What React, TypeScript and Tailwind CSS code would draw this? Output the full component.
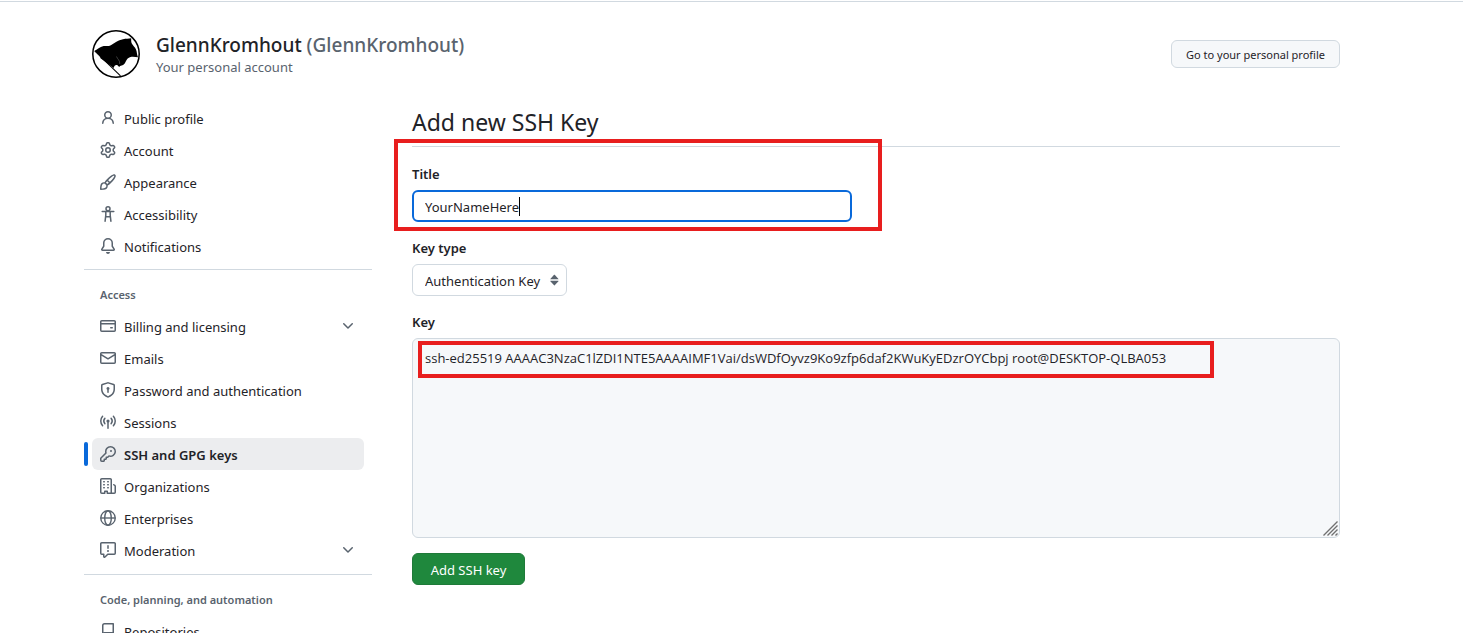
import { ReactNode, useState } from 'react';

function Icon({ children }: { children: ReactNode }) {
  return (
    <svg viewBox="0 0 16 16" className="size-4 shrink-0 fill-[#59636e] text-[#59636e]" aria-hidden="true">
      {children}
    </svg>
  );
}

const icons = {
  person: (
    <path d="M10.561 8.073a6.005 6.005 0 0 1 3.432 5.142.75.75 0 1 1-1.498.07 4.5 4.5 0 0 0-8.99 0 .75.75 0 0 1-1.498-.07 6.004 6.004 0 0 1 3.431-5.142 3.999 3.999 0 1 1 5.123 0ZM10.5 5a2.5 2.5 0 1 0-5 0 2.5 2.5 0 0 0 5 0Z" />
  ),
  gear: (
    <path d="M8 0a8.2 8.2 0 0 1 .701.031C9.444.095 9.99.645 10.16 1.29l.288 1.107c.018.066.079.158.212.224.231.114.454.243.668.386.123.082.233.09.299.071l1.103-.303c.644-.176 1.392.021 1.82.63.27.385.506.792.704 1.218.315.675.111 1.422-.364 1.891l-.814.806c-.049.048-.098.147-.088.294.016.257.016.515 0 .772-.01.147.038.246.088.294l.814.806c.475.469.679 1.216.364 1.891a7.977 7.977 0 0 1-.704 1.217c-.428.61-1.176.807-1.82.63l-1.102-.302c-.067-.019-.177-.011-.3.071a5.909 5.909 0 0 1-.668.386c-.133.066-.194.158-.211.224l-.29 1.106c-.168.646-.715 1.196-1.458 1.26a8.006 8.006 0 0 1-1.402 0c-.743-.064-1.289-.614-1.458-1.26l-.289-1.106c-.018-.066-.079-.158-.212-.224a5.738 5.738 0 0 1-.668-.386c-.123-.082-.233-.09-.299-.071l-1.103.303c-.644.176-1.392-.021-1.82-.63a8.12 8.12 0 0 1-.704-1.218c-.315-.675-.111-1.422.363-1.891l.815-.806c.05-.048.098-.147.088-.294a6.214 6.214 0 0 1 0-.772c.01-.147-.038-.246-.088-.294l-.815-.806C.635 6.045.431 5.298.746 4.623a7.92 7.92 0 0 1 .704-1.217c.428-.61 1.176-.807 1.82-.63l1.102.302c.067.019.177.011.3-.071.214-.143.437-.272.668-.386.133-.066.194-.158.211-.224l.29-1.106C6.009.645 6.556.095 7.299.03 7.53.01 7.764 0 8 0Zm-.571 1.525c-.036.003-.108.036-.137.146l-.289 1.105c-.147.561-.549.967-.998 1.189-.173.086-.34.183-.5.29-.417.278-.97.423-1.529.27l-1.103-.303c-.109-.03-.175.016-.195.045-.22.312-.412.644-.573.99-.014.031-.021.11.059.19l.815.806c.411.406.562.957.53 1.456a4.709 4.709 0 0 0 0 .582c.032.499-.119 1.05-.53 1.456l-.815.806c-.081.08-.073.159-.059.19.162.346.353.677.573.989.02.03.085.076.195.046l1.102-.303c.56-.153 1.113-.008 1.53.27.161.107.328.204.501.29.447.222.85.629.997 1.189l.289 1.105c.029.109.101.143.137.146a6.6 6.6 0 0 0 1.142 0c.036-.003.108-.036.137-.146l.289-1.105c.147-.561.549-.967.998-1.189.173-.086.34-.183.5-.29.417-.278.97-.423 1.529-.27l1.103.303c.109.029.175-.016.195-.045.22-.313.411-.644.573-.99.014-.031.021-.11-.059-.19l-.815-.806c-.411-.406-.562-.957-.53-1.456a4.709 4.709 0 0 0 0-.582c-.032-.499.119-1.05.53-1.456l.815-.806c.081-.08.073-.159.059-.19a6.464 6.464 0 0 0-.573-.989c-.02-.03-.085-.076-.195-.046l-1.102.303c-.56.153-1.113.008-1.53-.27a4.44 4.44 0 0 0-.501-.29c-.447-.222-.85-.629-.997-1.189l-.289-1.105c-.029-.11-.101-.143-.137-.146a6.6 6.6 0 0 0-1.142 0ZM11 8a3 3 0 1 1-6 0 3 3 0 0 1 6 0ZM9.5 8a1.5 1.5 0 1 0-3.001.001A1.5 1.5 0 0 0 9.5 8Z" />
  ),
  brush: (
    <path d="M11.134 1.535c.7-.509 1.416-.942 2.076-1.155.649-.21 1.463-.267 2.069.34.603.601.568 1.411.368 2.07-.202.668-.624 1.39-1.125 2.096-1.011 1.424-2.496 2.987-3.775 4.249-1.098 1.084-2.132 1.839-3.04 2.3a3.744 3.744 0 0 1-1.055 3.217c-.431.431-1.065.691-1.657.861-.614.177-1.294.287-1.914.357A21.151 21.151 0 0 1 .797 16H.743l.007-.75H.749L.742 16a.75.75 0 0 1-.743-.742l.743-.008-.742.007v-.054a21.25 21.25 0 0 1 .13-2.284c.067-.647.187-1.287.358-1.914.17-.591.43-1.226.86-1.657a3.746 3.746 0 0 1 3.227-1.054c.466-.893 1.225-1.907 2.314-2.982 1.271-1.255 2.833-2.75 4.245-3.777ZM1.62 13.089c-.051.464-.086.929-.104 1.395.466-.018.932-.053 1.396-.104a10.511 10.511 0 0 0 1.668-.309c.526-.151.856-.325 1.011-.48a2.25 2.25 0 1 0-3.182-3.182c-.155.155-.329.485-.48 1.01a10.515 10.515 0 0 0-.309 1.67Zm10.396-10.34c-1.224.89-2.605 2.189-3.822 3.384l1.718 1.718c1.21-1.205 2.51-2.597 3.387-3.833.47-.662.78-1.227.912-1.662.134-.444.032-.551.009-.575h-.001V1.78c-.014-.014-.113-.113-.548.027-.432.14-.995.462-1.655.942Zm-4.832 7.266-.001.001a9.859 9.859 0 0 0 1.63-1.142L7.155 7.216a9.7 9.7 0 0 0-1.161 1.607c.482.302.889.71 1.19 1.192Z" />
  ),
  accessibility: (
    <g fill="none" stroke="currentColor" strokeWidth="1.5" strokeLinecap="round" strokeLinejoin="round">
      <circle cx="8" cy="2.8" r="2" />
      <path d="M2.2 5.5h11.6M5.8 5.8v3.400l-.7 6M10.200 5.800v3.400l.7 6M5.900 10.800h4.200" />
    </g>
  ),
  bell: (
    <path d="M8 16a2 2 0 0 0 1.985-1.75c.017-.137-.097-.25-.235-.25h-3.5c-.138 0-.252.113-.235.25A2 2 0 0 0 8 16ZM3 5a5 5 0 0 1 10 0v2.947c0 .05.015.098.042.139l1.703 2.555A1.519 1.519 0 0 1 13.482 13H2.518a1.516 1.516 0 0 1-1.263-2.36l1.703-2.554A.255.255 0 0 0 3 7.947Zm5-3.5A3.5 3.5 0 0 0 4.5 5v2.947c0 .346-.102.683-.294.97l-1.703 2.556a.017.017 0 0 0-.003.01l.001.006c0 .002.002.004.004.006l.006.004.007.001h10.964l.007-.001.006-.004.004-.006.001-.007a.017.017 0 0 0-.003-.01l-1.703-2.554a1.745 1.745 0 0 1-.294-.97V5A3.5 3.5 0 0 0 8 1.5Z" />
  ),
  card: (
    <path d="M10.75 9a.75.75 0 0 0 0 1.5h1.5a.75.75 0 0 0 0-1.5h-1.5ZM0 3.75C0 2.784.784 2 1.75 2h12.5c.966 0 1.75.784 1.75 1.75v8.5A1.75 1.75 0 0 1 14.25 14H1.75A1.75 1.75 0 0 1 0 12.25ZM14.5 6.5h-13v5.75c0 .138.112.25.25.25h12.5a.25.25 0 0 0 .25-.25Zm0-2.75a.25.25 0 0 0-.25-.25H1.75a.25.25 0 0 0-.25.25V5h13Z" fillRule="evenodd" />
  ),
  mail: (
    <path d="M1.75 2h12.5c.966 0 1.75.784 1.75 1.75v8.5A1.75 1.75 0 0 1 14.25 14H1.75A1.75 1.75 0 0 1 0 12.25v-8.5C0 2.784.784 2 1.75 2ZM1.5 12.251c0 .138.112.25.25.25h12.5a.25.25 0 0 0 .25-.25V5.809L8.38 9.397a.75.75 0 0 1-.76 0L1.5 5.809v6.442Zm13-8.181v-.32a.25.25 0 0 0-.25-.25H1.75a.25.25 0 0 0-.25.25v.32L8 7.88Z" />
  ),
  shield: (
    <path d="m8.533.133 5.25 1.68A1.75 1.75 0 0 1 15 3.48V7c0 1.566-.32 3.182-1.303 4.682-.983 1.498-2.585 2.813-5.032 3.855a1.697 1.697 0 0 1-1.33 0c-2.447-1.042-4.049-2.357-5.032-3.855C1.32 10.182 1 8.566 1 7V3.48a1.75 1.75 0 0 1 1.217-1.667l5.25-1.68a1.748 1.748 0 0 1 1.066 0Zm-.61 1.429.001.001-5.25 1.68a.251.251 0 0 0-.174.237V7c0 1.36.275 2.666 1.057 3.859.784 1.194 2.121 2.342 4.366 3.298a.196.196 0 0 0 .154 0c2.245-.957 3.582-2.103 4.366-3.297C13.225 9.666 13.5 8.358 13.5 7V3.48a.25.25 0 0 0-.174-.238l-5.25-1.68a.25.25 0 0 0-.153 0ZM9.5 6.5c0 .536-.286 1.032-.75 1.3v2.45a.75.75 0 0 1-1.5 0V7.8A1.5 1.5 0 1 1 9.5 6.5Z" />
  ),
  broadcast: (
    <g>
      <path
        d="M2.6 2.2a7.2 7.2 0 0 0 0 9.6M13.4 2.2a7.2 7.2 0 0 1 0 9.6M4.9 4.3a4.2 4.2 0 0 0 0 5.4M11.1 4.3a4.2 4.2 0 0 1 0 5.4M8 7v7.3"
        fill="none"
        stroke="currentColor"
        strokeWidth="1.5"
        strokeLinecap="round"
      />
      <circle cx="8" cy="7" r="1.6" />
    </g>
  ),
  key: (
    <path d="M10.5 0a5.499 5.499 0 1 1-1.288 10.848l-.932.932a.749.749 0 0 1-.53.22H7v.75a.749.749 0 0 1-.22.53l-.5.5a.749.749 0 0 1-.53.22H5v.75a.749.749 0 0 1-.22.53l-.5.5a.749.749 0 0 1-.53.22h-2A1.75 1.75 0 0 1 0 14.25v-2c0-.199.079-.389.22-.53l4.932-4.932A5.5 5.5 0 0 1 10.5 0Zm-4 5.5c-.001.431.069.86.205 1.269a.75.75 0 0 1-.181.768L1.5 12.56v1.69c0 .138.112.25.25.25h1.69l.06-.06v-1.19a.75.75 0 0 1 .75-.75h1.19l.06-.06v-1.19a.75.75 0 0 1 .75-.75h1.19l1.023-1.025a.75.75 0 0 1 .768-.18A4 4 0 1 0 6.5 5.5ZM11 6a1 1 0 1 1 0-2 1 1 0 0 1 0 2Z" />
  ),
  organization: (
    <path d="M1.75 16A1.75 1.75 0 0 1 0 14.25V1.75C0 .784.784 0 1.75 0h8.5C11.216 0 12 .784 12 1.75v12.5c0 .085-.006.168-.018.25h2.268a.25.25 0 0 0 .25-.25V8.285a.25.25 0 0 0-.111-.208l-1.055-.703a.749.749 0 1 1 .832-1.248l1.055.703c.487.325.779.871.779 1.456v5.965A1.75 1.75 0 0 1 14.25 16h-3.5a.766.766 0 0 1-.197-.026c-.099.017-.2.026-.303.026h-3a.75.75 0 0 1-.75-.75V14h-1v1.25a.75.75 0 0 1-.75.75Zm-.25-1.75c0 .138.112.25.25.25H4v-1.25a.75.75 0 0 1 .75-.75h2.5a.75.75 0 0 1 .75.75v1.25h2.25a.25.25 0 0 0 .25-.25V1.75a.25.25 0 0 0-.25-.25h-8.5a.25.25 0 0 0-.25.25ZM3.75 6h.5a.75.75 0 0 1 0 1.5h-.5a.75.75 0 0 1 0-1.5ZM3 3.75A.75.75 0 0 1 3.75 3h.5a.75.75 0 0 1 0 1.5h-.5A.75.75 0 0 1 3 3.75Zm4 3A.75.75 0 0 1 7.75 6h.5a.75.75 0 0 1 0 1.5h-.5A.75.75 0 0 1 7 6.75ZM7.75 3h.5a.75.75 0 0 1 0 1.5h-.5a.75.75 0 0 1 0-1.5ZM3 9.75A.75.75 0 0 1 3.75 9h.5a.75.75 0 0 1 0 1.5h-.5A.75.75 0 0 1 3 9.75ZM7.75 9h.5a.75.75 0 0 1 0 1.5h-.5a.75.75 0 0 1 0-1.5Z" />
  ),
  globe: (
    <g fill="none" stroke="currentColor" strokeWidth="1.4">
      <circle cx="8" cy="8" r="7.25" />
      <ellipse cx="8" cy="8" rx="3.3" ry="7.25" />
      <path d="M.8 8h14.4" />
    </g>
  ),
  report: (
    <path d="M0 1.75C0 .784.784 0 1.75 0h12.5C15.216 0 16 .784 16 1.75v9.5A1.75 1.75 0 0 1 14.25 13H8.06l-2.573 2.573A1.458 1.458 0 0 1 3 14.543V13H1.75A1.75 1.75 0 0 1 0 11.25Zm1.75-.25a.25.25 0 0 0-.25.25v9.5c0 .138.112.25.25.25h2a.75.75 0 0 1 .75.75v2.19l2.72-2.72a.749.749 0 0 1 .53-.22h6.5a.25.25 0 0 0 .25-.25v-9.5a.25.25 0 0 0-.25-.25Zm7 2.25v2.5a.75.75 0 0 1-1.5 0v-2.5a.75.75 0 0 1 1.5 0ZM9 9a1 1 0 1 1-2 0 1 1 0 0 1 2 0Z" />
  ),
  repo: (
    <path d="M2 2.5A2.5 2.5 0 0 1 4.5 0h8.75a.75.75 0 0 1 .75.75v12.5a.75.75 0 0 1-.75.75h-2.5a.75.75 0 0 1 0-1.5h1.75v-2h-8a1 1 0 0 0-.714 1.7.75.75 0 1 1-1.072 1.05A2.495 2.495 0 0 1 2 11.5Zm10.5-1h-8a1 1 0 0 0-1 1v6.708A2.486 2.486 0 0 1 4.5 9h8Z" />
  ),
  chevron: (
    <path d="M12.78 5.22a.749.749 0 0 1 0 1.06l-4.25 4.25a.749.749 0 0 1-1.06 0L3.22 6.28a.749.749 0 1 1 1.06-1.06L8 8.939l3.72-3.719a.749.749 0 0 1 1.06 0Z" />
  ),
};

type IconName = keyof typeof icons;
type Item = { icon: IconName; label: string; current?: boolean; expandable?: boolean };

const profileItems: Item[] = [
  { icon: 'person', label: 'Public profile' },
  { icon: 'gear', label: 'Account' },
  { icon: 'brush', label: 'Appearance' },
  { icon: 'accessibility', label: 'Accessibility' },
  { icon: 'bell', label: 'Notifications' },
];

const accessItems: Item[] = [
  { icon: 'card', label: 'Billing and licensing', expandable: true },
  { icon: 'mail', label: 'Emails' },
  { icon: 'shield', label: 'Password and authentication' },
  { icon: 'broadcast', label: 'Sessions' },
  { icon: 'key', label: 'SSH and GPG keys', current: true },
  { icon: 'organization', label: 'Organizations' },
  { icon: 'globe', label: 'Enterprises' },
  { icon: 'report', label: 'Moderation', expandable: true },
];

const codeItems: Item[] = [{ icon: 'repo', label: 'Repositories' }];

function NavItem({ icon, label, current, expandable }: Item) {
  const body = (
    <>
      <Icon>{icons[icon]}</Icon>
      <span className="grow pt-0.5 text-left">{label}</span>
      {expandable && <Icon>{icons.chevron}</Icon>}
    </>
  );
  if (expandable) {
    return (
      <li className="px-2">
        <button type="button" className="flex h-8 w-full items-center gap-2 rounded-md px-2">
          {body}
        </button>
      </li>
    );
  }
  return (
    <li className="relative px-2">
      {current && <span className="absolute top-1 left-0 h-6 w-1 rounded-md bg-[#0969da]" />}
      <a
        href="#"
        aria-current={current ? 'page' : undefined}
        className={
          current
            ? 'flex h-8 items-center gap-2 rounded-md bg-[#ecedef] px-2 font-semibold'
            : 'flex h-8 items-center gap-2 rounded-md px-2'
        }
      >
        {body}
      </a>
    </li>
  );
}

function NavGroup({ title, items }: { title?: string; items: Item[] }) {
  return (
    <section>
      {title && <h3 className="px-4 pt-4 pb-1.5 text-[11px] leading-[18px] font-semibold text-[#59636e]">{title}</h3>}
      <ul>
        {items.map((item) => (
          <NavItem key={item.label} {...item} />
        ))}
      </ul>
    </section>
  );
}

function Avatar() {
  return (
    <svg viewBox="0 0 48 48" className="size-12 shrink-0" role="img" aria-label="GlennKromhout">
      <circle cx="24" cy="24" r="23.2" fill="#fff" stroke="#000" strokeWidth="1.5" />
      <path
        d="M2.700 20.800C5 19.500 7.500 17.500 9.500 16.700c3-1.100 5.500-.4 7.500-.7 2.800-.6 4-2.600 7-4 2.500-1.200 4.500-2.200 7-2.700 3-.7 5.500-.6 8.200-1 0 2.200-.2 3.300.6 5.200 1.200 2.300 3.200 3.500 4.200 6 1 2.300.8 5 2 7.700-2.500-.2-5-1-7.500-.2-2.500.7-3.500 2-4.500 4-.8 1.800-1.500 3.500-3.500 4.300-1.300.5-2 .5-3 1.400-1.300 0-1.500-1-2.300-1.600-1.700-.6-3 .6-3.500 3L8.500 28.200C8.200 26 6.500 24.500 2.700 20.800Z"
        fill="#000"
      />
      <path d="M2.700 20.800 28.500 45.800" stroke="#000" strokeWidth="1.100" />
      <path d="M24.500 26.500c.8 2.500 3.800 4 3.200 7.500" fill="none" stroke="#666" strokeWidth=".6" />
    </svg>
  );
}

export default function App() {
  const [title, setTitle] = useState('YourNameHere');
  const [key, setKey] = useState(
    'ssh-ed25519 AAAAC3NzaC1lZDI1NTE5AAAAIMF1Vai/dsWDfOyvz9Ko9zfp6daf2KWuKyEDzrOYCbpj root@DESKTOP-QLBA053',
  );

  return (
    <div className="bg-white pt-px pr-[15px] font-['Noto_Sans',sans-serif] text-[13px] leading-5 text-[#1f2328]">
      <div className="-mr-[15px] h-px bg-[#d1d9e0]" />
      <div className="mx-auto max-w-[1280px] pr-6">
        <header className="flex items-center pt-7 pl-2">
          <Avatar />
          <div className="ml-4 grow pt-0.5">
            <h1 className="text-[19px] leading-6 font-medium">
              GlennKromhout <span className="text-[#59636e]">(GlennKromhout)</span>
            </h1>
            <p className="text-[#59636e]">Your personal account</p>
          </div>
          <a
            href="#"
            className="flex h-7 items-center rounded-md border border-[#d1d9e0] bg-[#f6f8fa] px-3.5 pt-0.5 text-[11px] whitespace-nowrap"
          >
            Go to your personal profile
          </a>
        </header>

        <div className="flex items-start gap-10">
          <nav aria-label="Settings" className="mt-6 w-[288px] shrink-0">
            <NavGroup items={profileItems} />
            <hr className="mt-[7px] border-[#d1d9e0]" />
            <NavGroup title="Access" items={accessItems} />
            <hr className="mt-2 border-[#d1d9e0]" />
            <NavGroup title="Code, planning, and automation" items={codeItems} />
          </nav>

          <main className="mt-7 min-w-0 grow">
            <h2 className="border-b border-[#d1d9e0] pb-2 text-[23px] leading-8">Add new SSH Key</h2>

            <form className="pt-[17px]" onSubmit={(e) => e.preventDefault()}>
              <div className="relative w-[440px] max-w-full">
                <label htmlFor="key-title" className="block font-semibold">
                  Title
                </label>
                <div className="relative mt-1.5">
                  <input
                    id="key-title"
                    value={title}
                    onChange={(e) => setTitle(e.target.value)}
                    className="h-8 w-full rounded-md border-2 border-[#0969da] bg-white px-[11px] pt-0.5 outline-none"
                  />
                  <span className="absolute top-[7px] left-[107px] h-[19px] w-px bg-black" />
                </div>
                <div className="pointer-events-none absolute -top-[25px] -right-[30px] -bottom-[9px] -left-[18px] border-4 border-[#e81e1e]" />
              </div>

              <div className="mt-4">
                <label htmlFor="key-type" className="block font-semibold">
                  Key type
                </label>
                <div className="relative mt-1.5 w-[155px]">
                  <select
                    id="key-type"
                    className="h-8 w-full appearance-none rounded-md border border-[#d1d9e0] bg-white pt-0.5 pr-6 pl-3"
                  >
                    <option>Authentication Key</option>
                    <option>Signing Key</option>
                  </select>
                  <svg
                    viewBox="0 0 16 16"
                    className="pointer-events-none absolute top-2 right-1 size-4 fill-[#59636e]"
                    aria-hidden="true"
                  >
                    <path d="m3.300 9.200 3.800 4.100a.4.4 0 0 0 .6 0l3.800-4.100A.25.25 0 0 0 11.300 8.800H3.500a.25.25 0 0 0-.2.4ZM3.300 6.900 7.100 2.800a.4.4 0 0 1 .6 0l3.800 4.100a.25.25 0 0 1-.2.4H3.500a.25.25 0 0 1-.2-.4Z" />
                  </svg>
                </div>
              </div>

              <div className="mt-4">
                <label htmlFor="key-body" className="block font-semibold">
                  Key
                </label>
                <div className="relative mt-1.5">
                  <textarea
                    id="key-body"
                    value={key}
                    onChange={(e) => setKey(e.target.value)}
                    className="block h-[200px] w-full resize-none rounded-md border border-[#d1d9e0] bg-[#f6f8fa] px-3 py-[9px] font-['Open_Sans',sans-serif] leading-5"
                  />
                  <div className="pointer-events-none absolute top-[3px] left-1.5 h-[37px] w-[796px] border-4 border-[#e81e1e]" />
                  <svg
                    viewBox="0 0 15 15"
                    className="pointer-events-none absolute right-0.5 bottom-0.5 size-[15px]"
                    aria-hidden="true"
                  >
                    <path d="M.5 14.500 14.500.5M4.500 14.500l10-10M8.500 14.500l6-6M12.500 14.500l2-2" stroke="#707070" strokeWidth="1.400" />
                  </svg>
                </div>
              </div>

              <button
                type="submit"
                className="mt-[15px] h-8 min-w-[113px] rounded-md border border-[#1f7a39] bg-[#1f883d] px-4 pt-0.5 text-white"
              >
                Add SSH key
              </button>
            </form>
          </main>
        </div>
      </div>
    </div>
  );
}
